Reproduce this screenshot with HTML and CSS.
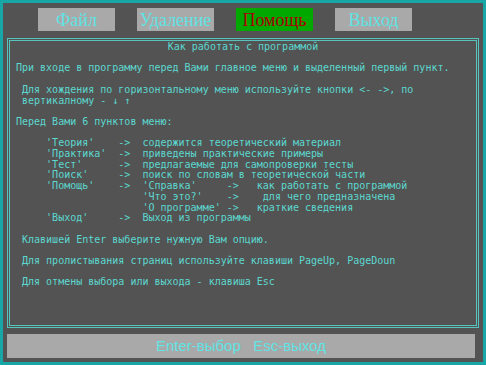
FILE: index.html
```html
<!DOCTYPE html>
<html lang="ru">
<head>
    <meta charset="UTF-8">
    <title>Помощь</title>
    <link rel="stylesheet" href="styles.css">
</head>
<body>
    <div class="screen">
        <!-- Top menu -->
        <div class="menu">
            <div class="menu-item">Файл</div>
            <div class="menu-item">Удаление</div>
            <div class="menu-item active">Помощь</div>
            <div class="menu-item">Выход</div>
        </div>

        <!-- Help text window -->
        <div class="panel">
            <div class="panel-title">Как работать с программой</div>
<pre class="panel-text">

При входе в программу перед Вами главное меню и выделенный первый пункт.

 Для хождения по горизонтальному меню используйте кнопки &lt;- -&gt;, по
 вертикалному - ↓ ↑

Перед Вами 6 пунктов меню:

     'Теория'    -&gt;  содержится теоретический материал
     'Практика'  -&gt;  приведены практические примеры
     'Тест'      -&gt;  предлагаемые для самопроверки тесты
     'Поиск'     -&gt;  поиск по словам в теоретической части
     'Помощь'    -&gt;  'Справка'     -&gt;   как работать с программой
                     'Что это?'    -&gt;    для чего предназначена
                     'О программе' -&gt;   краткие сведения
     'Выход'     -&gt;  Выход из программы

 Клавишей Enter выберите нужную Вам опцию.

 Для пролистывания страниц используйте клавиши PageUp, PageDoun

 Для отмены выбора или выхода - клавиша Esc</pre>
        </div>

        <div class="status">Enter-выбор&nbsp;&nbsp;&nbsp;Esc-выход</div>
    </div>
</body>
</html>
```

FILE: styles.css
```css
/* Whole screen */
body {
    margin: 0;
    background-color: #555555;
}
.screen {
    box-sizing: border-box;
    width: 486px;
    height: 365px;
    border: 3px solid #18a6a6;
    background-color: #535353;
    padding: 5px 0 0 4px;
}

/* Top menu */
.menu {
    display: flex;
    gap: 22px;
    padding-left: 31px;
}
.menu-item {
    width: 77px;
    height: 23px;
    background-color: #a9a9a9;
    color: #5fe3e3;
    font-family: "Liberation Serif", serif;
    font-size: 18px;
    line-height: 24px;
    text-align: center;
}
.menu-item.active {
    background-color: #00a800;
    color: #a80000;
}

/* Help window */
.panel {
    box-sizing: border-box;
    width: 472px;
    height: 290px;
    margin-top: 7px;
    border: 3px double #56c4bc;
    padding: 1px 0 0 6px;
    color: #5cd8d0;
    font-family: "DejaVu Sans Mono", monospace;
    font-size: 10px;
    line-height: 10.7px;
}
.panel-title {
    text-align: center;
    padding-right: 6px;
}
.panel-text {
    margin: 0;
    font: inherit;
    white-space: pre;
}

/* Bottom status bar */
.status {
    width: 468px;
    height: 24px;
    margin-top: 6px;
    background-color: #a9a9a9;
    color: #5fe3e3;
    font-family: "Liberation Sans", sans-serif;
    font-size: 15px;
    line-height: 24px;
    text-align: center;
}
```
